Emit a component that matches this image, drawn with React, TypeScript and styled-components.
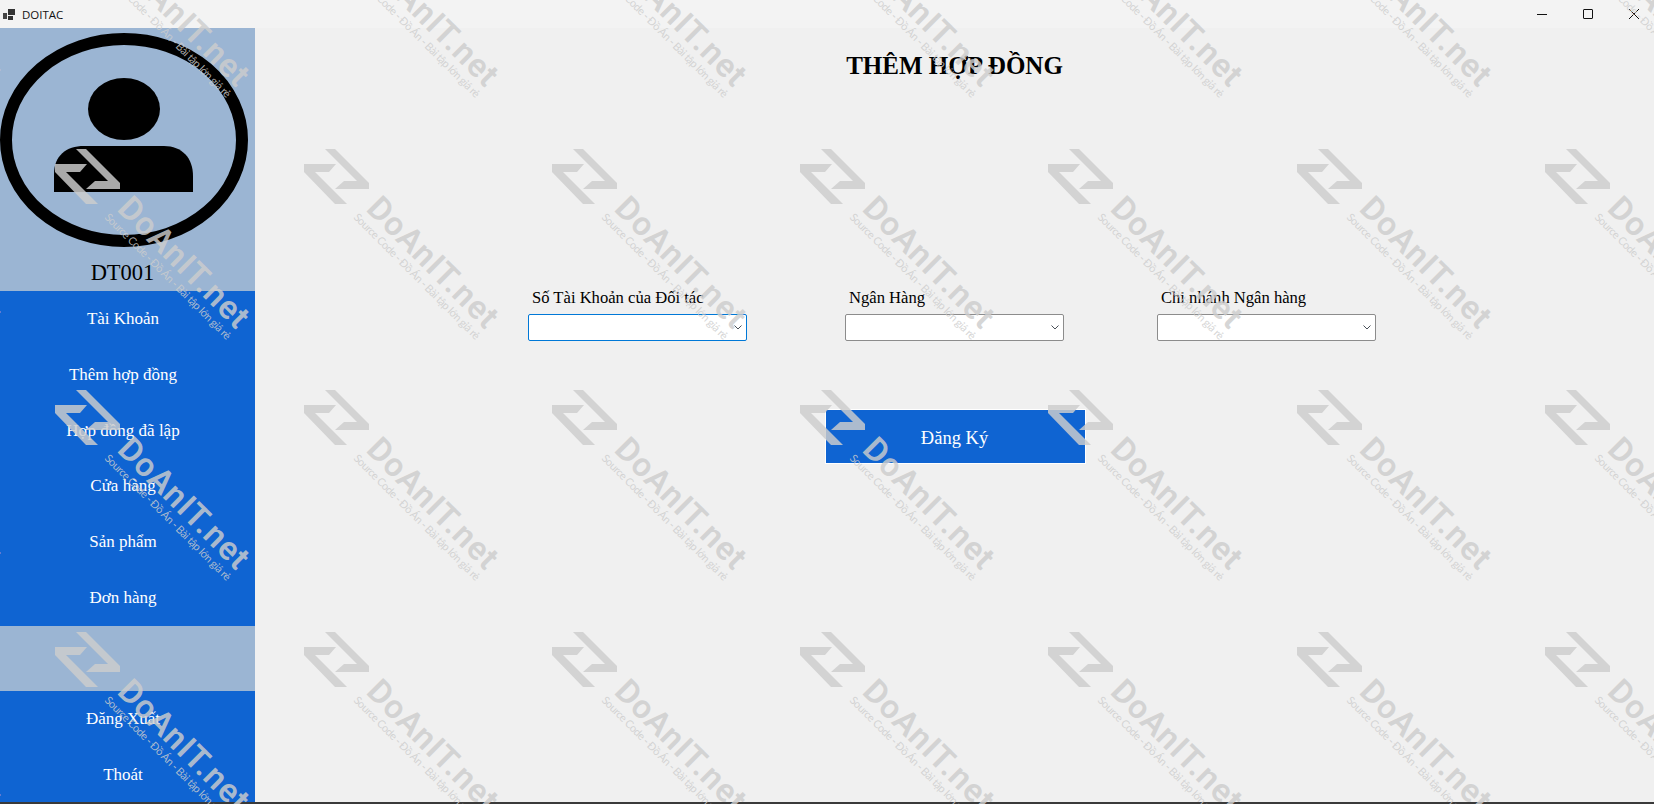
import React from 'react';
import styled, { createGlobalStyle } from 'styled-components';

const GlobalStyle = createGlobalStyle`
    html, body {
        margin: 0;
        padding: 0;
        height: 100%;
        overflow: hidden;
        background: #f0f0f0;
    }
`

const menuTop = ['Tài Khoản', 'Thêm hợp đồng', 'Hợp đồng đã lập', 'Cửa hàng', 'Sản phẩm', 'Đơn hàng'];
const menuBottom = ['Đăng Xuất', 'Thoát'];
const fields = ['Số Tài Khoản của Đối tác', 'Ngân Hàng', 'Chi nhánh Ngân hàng'];

const Avatar = () => (
    <AvatarSvg viewBox="0 0 255 228">
        <ellipse cx="124" cy="112" rx="118" ry="101" fill="none" stroke="#000" strokeWidth="12"/>
        <ellipse cx="124" cy="81" rx="36" ry="31" fill="#000"/>
        <path d="M54 164 V146 C54 128 66 118 84 118 H164 C182 118 193 130 193 148 V164 Z" fill="#000"/>
    </AvatarSvg>
);

const Chevron = () => (
    <ChevronSvg viewBox="0 0 8 5">
        <path d="M0.5 0.5 L4 4 L7.5 0.5" fill="none" stroke="#4a5058" strokeWidth="1"/>
    </ChevronSvg>
);

const Mark = () => (
    <TileSvg viewBox="0 0 248 242">
        <g fill="#cdcdcd" fillOpacity="0.83">
            <polygon points="21,1 31,1 65,35 65,41 31,41 40,33 53,33"/>
            <polygon points="0,16 32,16 25,24 11,24 43,56 31,56 0,24"/>
            <text x="0" y="0" transform="translate(61,62) rotate(45)" fontFamily="Roboto, sans-serif" fontWeight="600" fontSize="33" textLength="170">DoAnIT.net</text>
            <text x="0" y="0" transform="translate(49,70) rotate(45)" fontFamily="Lato, sans-serif" fontSize="11" textLength="173">Source Code - Đồ Án - Bài tập lớn giá rẻ</text>
        </g>
    </TileSvg>
);

const App = () => {
    return (
        <Windows>
            <GlobalStyle/>
            <TitleBar>
                <AppIcon viewBox="0 0 12 11">
                    <rect x="0" y="4" width="4" height="6" fill="#444"/>
                    <rect x="5" y="0" width="7" height="6" fill="#333"/>
                    <rect x="5" y="7" width="5" height="4" fill="#333"/>
                </AppIcon>
                <AppName>DOITAC</AppName>
                <Controls>
                    <ControlSvg viewBox="0 0 10 10"><path d="M0 5.5 H10" stroke="#111" fill="none"/></ControlSvg>
                    <ControlSvg viewBox="0 0 10 10"><rect x="0.5" y="0.5" width="9" height="9" rx="0.5" stroke="#111" fill="none"/></ControlSvg>
                    <ControlSvg viewBox="0 0 10 10"><path d="M0 0 L10 10 M10 0 L0 10" stroke="#111" fill="none"/></ControlSvg>
                </Controls>
            </TitleBar>
            <Body>
                <Sidebar>
                    <Profile>
                        <Avatar/>
                        <UserCode>DT001</UserCode>
                    </Profile>
                    <Menu>
                        {menuTop.map(item => <MenuItem key={item}>{item}</MenuItem>)}
                    </Menu>
                    <Spacer/>
                    <Menu>
                        {menuBottom.map(item => <MenuItem key={item}>{item}</MenuItem>)}
                    </Menu>
                </Sidebar>
                <Main>
                    <Title>THÊM HỢP ĐỒNG</Title>
                    <Form>
                        {fields.map((field, i) => (
                            <Field key={field}>
                                <Label>{field}</Label>
                                <Select $focused={i === 0}>
                                    <Chevron/>
                                </Select>
                            </Field>
                        ))}
                    </Form>
                    <SubmitButton>Đăng Ký</SubmitButton>
                </Main>
            </Body>
            <BottomLine/>
            <Watermark>
                {Array.from({length: 40}).map((_, i) => <Mark key={i}/>)}
            </Watermark>
        </Windows>
    );
};

export default App;

const Windows = styled.div`
    position: relative;
    width: 1654px;
    height: 804px;
    display: flex;
    flex-direction: column;
    overflow: hidden;
    background-color: #f0f0f0;
`

const TitleBar = styled.div`
    height: 28px;
    flex-shrink: 0;
    display: flex;
    align-items: center;
    padding-left: 3px;
    background-color: #f3f3f3;
`

const AppIcon = styled.svg`
    width: 12px;
    height: 11px;
    margin-right: 7px;
`

const AppName = styled.span`
    font-family: "Open Sans", sans-serif;
    font-size: 11.5px;
    color: #111;
`

const Controls = styled.div`
    margin-left: auto;
    display: flex;
    gap: 36px;
    padding-right: 15px;
`

const ControlSvg = styled.svg`
    width: 10px;
    height: 10px;
`

const Body = styled.div`
    flex: 1;
    display: flex;
    min-height: 0;
`

const BottomLine = styled.div`
    height: 2px;
    flex-shrink: 0;
    background-color: #3a3a3a;
`

const Sidebar = styled.aside`
    width: 255px;
    flex-shrink: 0;
    display: flex;
    flex-direction: column;
    background-color: #0f64d2;
`

const Profile = styled.div`
    height: 263px;
    flex-shrink: 0;
    display: flex;
    flex-direction: column;
    background-color: #9bb5d3;
`

const AvatarSvg = styled.svg`
    width: 255px;
    height: 228px;
    flex-shrink: 0;
`

const UserCode = styled.div`
    text-align: center;
    margin-right: 10px;
    padding-top: 1px;
    font-family: "Liberation Serif", serif;
    font-size: 22.5px;
    line-height: 32px;
    color: #000;
`

const Menu = styled.nav`
    display: flex;
    flex-direction: column;
`

const MenuItem = styled.div`
    height: 55.83px;
    padding: 19px 9px 0 0;
    box-sizing: border-box;
    text-align: center;
    font-family: "Liberation Serif", serif;
    font-size: 17px;
    line-height: 18px;
    color: #fff;
`

const Spacer = styled.div`
    height: 65px;
    flex-shrink: 0;
    background-color: #9bb5d3;
`

const Main = styled.main`
    flex: 1;
    display: flex;
    flex-direction: column;
    align-items: center;
`

const Title = styled.h1`
    margin: 21px 0 0;
    font-family: "Liberation Serif", serif;
    font-size: 25px;
    line-height: 34px;
    font-weight: 700;
    color: #000;
`

const Form = styled.div`
    display: grid;
    grid-template-columns: 317px 312px 219px;
    width: 848px;
    margin-top: 206px;
    margin-right: 5px;
`

const Field = styled.div`
    display: flex;
    flex-direction: column;
    align-items: flex-start;
`

const Label = styled.label`
    padding-left: 4px;
    font-family: "Liberation Serif", serif;
    font-size: 16.6px;
    line-height: 18px;
    margin-bottom: 7px;
    color: #000;
`

const Select = styled.div<{ $focused: boolean }>`
    width: 219px;
    height: 27px;
    box-sizing: border-box;
    display: flex;
    align-items: center;
    justify-content: flex-end;
    padding-right: 4px;
    background-color: #fff;
    border: 1px solid ${props => props.$focused ? '#0078d7' : '#8c8c8c'};
    border-radius: 2px;
`

const ChevronSvg = styled.svg`
    width: 8px;
    height: 5px;
`

const SubmitButton = styled.button`
    width: 261px;
    height: 55px;
    margin-top: 68px;
    margin-left: 2px;
    padding: 3px 2px 0 0;
    box-sizing: border-box;
    border: 1px solid #fff;
    background-color: #0f64d2;
    font-family: "Liberation Serif", serif;
    font-size: 18.5px;
    color: #fff;
`

const Watermark = styled.div`
    position: absolute;
    left: -193px;
    top: -94px;
    display: grid;
    grid-template-columns: repeat(8, 248.3px);
    grid-auto-rows: 241.5px;
    pointer-events: none;
`

const TileSvg = styled.svg`
    display: block;
    width: 248px;
    height: 242px;
    overflow: visible;
`
